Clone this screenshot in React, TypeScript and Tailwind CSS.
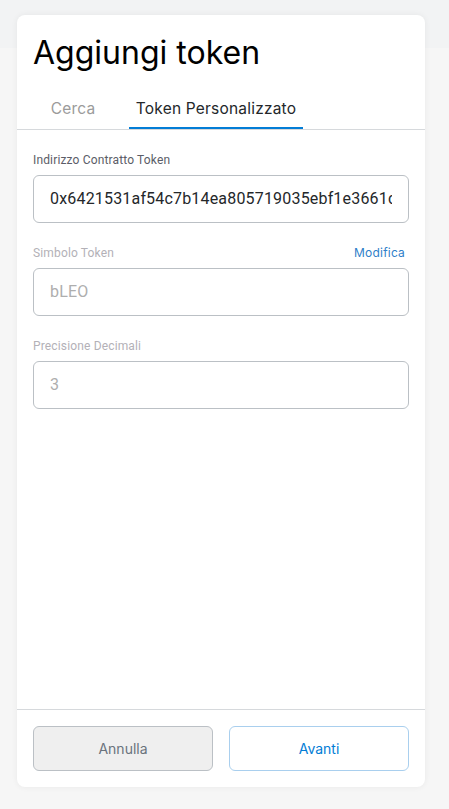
import React from "react";

const euclid = { fontFamily: "Inter, 'Noto Sans', sans-serif" };
const roboto = { fontFamily: "Roboto, 'Liberation Sans', sans-serif" };

function Field({
  label,
  value,
  disabled,
  action,
}: {
  label: string;
  value: string;
  disabled?: boolean;
  action?: string;
}) {
  return (
    <div className="flex flex-col">
      <div className="flex h-4 items-center justify-between">
        <span
          style={roboto}
          className={`text-[12px] leading-4 tracking-[0.15px] ${disabled ? "text-[#b3b1b7]" : "text-[#5b5d67]"}`}
        >
          {label}
        </span>
        {action && (
          <span style={euclid} className="mr-[4px] text-[12px] leading-4 tracking-[0.2px] text-[#2f80c9]">
            {action}
          </span>
        )}
      </div>
      <div className="mt-[7px] flex h-[48px] items-center rounded-[6px] border border-[#bbc0c5] bg-white px-[16px]">
        <span
          style={roboto}
          className={`min-w-0 flex-1 overflow-hidden whitespace-nowrap text-[16px] tracking-[0.18px] ${disabled ? "text-[#aeaeae]" : "text-[#24272a]"}`}
        >
          {value}
        </span>
      </div>
    </div>
  );
}

export default function App() {
  return (
    <div className="h-[809px] w-[449px] bg-[linear-gradient(to_bottom,#f2f3f4_0,#f2f3f4_48px,#f6f6f6_48px)] pl-[17px] pt-[15px]">
      <div className="flex h-[772px] w-[408px] flex-col rounded-[8px] bg-white shadow-[0_0_6px_rgba(0,0,0,0.06)]">
        <div className="px-[16px] pt-[20px]">
          <h1 style={euclid} className="text-[32px] leading-[36px] font-normal text-black">
            Aggiungi token
          </h1>
        </div>
        <div className="mt-[21px] flex h-[38px] items-stretch border-b border-[#d6d9dc] pl-[16px]">
          <div
            style={euclid}
            className="flex w-[80px] items-center justify-center pb-[4px] text-[15.5px] tracking-[0.2px] text-[#9b9b9b]"
          >
            Cerca
          </div>
          <div className="ml-[16px] flex w-[174px] flex-col">
            <div
              style={euclid}
              className="flex flex-1 items-center justify-center pb-[2px] text-[15.5px] tracking-[0.2px] text-[#24272a]"
            >
              Token Personalizzato
            </div>
            <div className="h-[2px] bg-[#037dd6]" />
          </div>
        </div>
        <div className="flex flex-1 flex-col gap-[22px] px-[16px] pt-[22px]">
          <Field label="Indirizzo Contratto Token" value="0x6421531af54c7b14ea805719035ebf1e3661c" />
          <Field label="Simbolo Token" value="bLEO" disabled action="Modifica" />
          <Field label="Precisione Decimali" value="3" disabled />
        </div>
        <div className="flex gap-[16px] border-t border-[#d6d9dc] px-[16px] pt-[16px] pb-[16px]">
          <button
            style={euclid}
            className="h-[45px] flex-1 rounded-[6px] border border-[#bbc0c5] bg-[#efefef] text-[14px] text-[#6a737d]"
          >
            Annulla
          </button>
          <button
            style={euclid}
            className="h-[45px] flex-1 rounded-[6px] border border-[#a9cfee] bg-white text-[14px] text-[#037dd6]"
          >
            Avanti
          </button>
        </div>
      </div>
    </div>
  );
}
